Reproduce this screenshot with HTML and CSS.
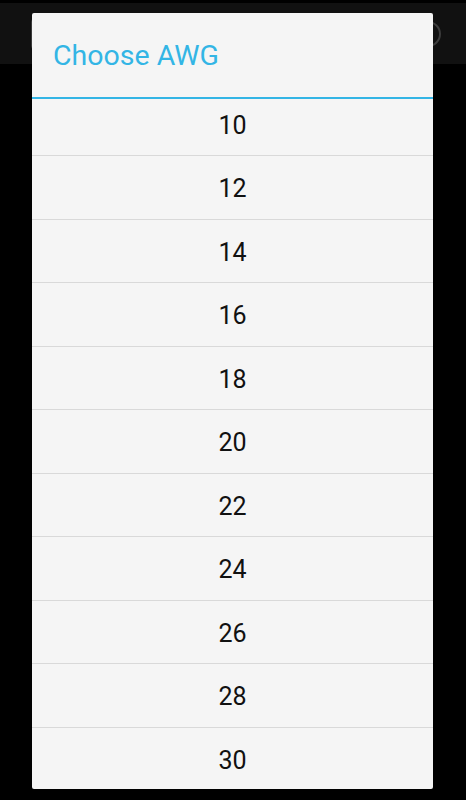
FILE: index.html
```html
<!DOCTYPE html>
<html>
<head>
    <title>Choose AWG</title>
    <link rel="stylesheet" href="styles.css">
</head>
<body>
    <!-- Activity behind the dialog -->
    <div class="action-bar">
        <div class="field"></div>
        <svg class="spinner" width="30" height="30" viewBox="0 0 30 30">
            <circle cx="15" cy="15" r="12" fill="none" stroke="#3c3c3c" stroke-width="2"/>
        </svg>
    </div>

    <div class="dialog">
        <div class="dialog-title">Choose AWG</div>
        <div class="dialog-list">
            <ul class="items">
                <li>10</li>
                <li>12</li>
                <li>14</li>
                <li>16</li>
                <li>18</li>
                <li>20</li>
                <li>22</li>
                <li>24</li>
                <li>26</li>
                <li>28</li>
                <li>30</li>
            </ul>
        </div>
    </div>
</body>
</html>
```

FILE: styles.css
```css
/* General body styles */
body {
    margin: 0;
    background-color: #000;
    font-family: Roboto, 'Noto Sans', sans-serif;
    height: 800px;
    overflow: hidden;
}

/* Action bar of the activity underneath */
.action-bar {
    margin-top: 3px;
    height: 61px;
    background-color: #111;
    display: flex;
    align-items: center;
    justify-content: space-between;
    padding: 0 23px 0 31px;
}

.action-bar .field {
    width: 60px;
    height: 30px;
    border: 1px solid #3a3a3a;
    border-radius: 4px;
}

/* Dialog */
.dialog {
    position: absolute;
    top: 13px;
    left: 32px;
    width: 401px;
    height: 776px;
    background-color: #f5f5f5;
    border-radius: 2px;
    display: flex;
    flex-direction: column;
    overflow: hidden;
}

.dialog-title {
    height: 86px;
    box-sizing: border-box;
    padding: 26px 0 0 21px;
    font-size: 28.5px;
    color: #33b5e5;
    border-bottom: 2px solid #33b5e5;
}

.dialog-list {
    flex: 1;
    overflow: hidden;
}

.items {
    list-style: none;
    margin: -6.5px 0 0 0;
    padding: 0;
}

.items li {
    height: 63.5px;
    box-sizing: border-box;
    border-bottom: 1px solid #d9d9d9;
    display: flex;
    align-items: center;
    justify-content: center;
    padding-top: 3px;
    font-size: 25px;
    color: #111;
}
```
